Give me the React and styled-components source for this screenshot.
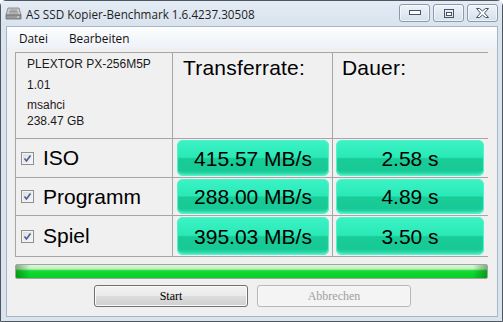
import React from 'react'
import styled, { createGlobalStyle } from 'styled-components'

const Global = createGlobalStyle`
  html, body { margin: 0; padding: 0; background: #fff; }
  body { width: 503px; height: 322px; overflow: hidden; }
`

const Window = styled.div`
  box-sizing: border-box;
  width: 503px;
  height: 322px;
  border: 1px solid #4f5660;
  border-radius: 6px 6px 0 0;
  background: #dae4ef;
  display: flex;
  flex-direction: column;
  font-family: 'Liberation Sans', Arial, sans-serif;
`

const TitleBar = styled.div`
  height: 24px;
  display: flex;
  align-items: center;
  padding: 0 4px 0 4px;
  background: linear-gradient(to bottom, #e4ecf5, #d9e3ee);
`

const Title = styled.span`
  margin-left: 4px;
  font-family: 'Open Sans', 'Noto Sans', sans-serif;
  font-size: 11.7px;
  color: #1e1e1e;
  flex: 1;
  padding-top: 1px;
`

const CaptionGroup = styled.div`
  display: flex;
  gap: 3px;
  align-self: flex-start;
  margin-top: 3px;
`

const CaptionButton = styled.div`
  box-sizing: border-box;
  width: 31px;
  height: 18px;
  border: 1px solid #8d9aaa;
  border-radius: 3px;
  background: linear-gradient(to bottom, #eef3f8, #d6e0ec);
  display: flex;
  align-items: center;
  justify-content: center;
  box-shadow: inset 0 0 0 1px rgba(255, 255, 255, 0.6);
`

const Client = styled.div`
  flex: 1;
  margin: 1px 4px 4px 5px;
  border: 1px solid #a9b5c3;
  background: #f0f0f0;
  display: flex;
  flex-direction: column;
`

const MenuBar = styled.div`
  height: 21px;
  display: flex;
  align-items: center;
  padding-left: 12px;
  gap: 21px;
  background: linear-gradient(to bottom, #fcfdfe, #eef2f7);
  font-family: 'Open Sans', 'Noto Sans', sans-serif;
  font-size: 11.8px;
  color: #111;
`

const Content = styled.div`
  flex: 1;
  display: flex;
  flex-direction: column;
  padding: 4px 9px 0 8px;
`

const Grid = styled.div`
  display: grid;
  grid-template-columns: 156px 159px 155px;
  grid-template-rows: 85px 38px 37px 40px;
  gap: 1px;
  padding: 1px;
  background: #a6a6a6;
`

const Cell = styled.div`
  background: #f0f0f0;
  display: flex;
  align-items: ${p => (p.$top ? 'flex-start' : 'center')};
  padding: ${p => p.$pad || '0'};
  box-sizing: border-box;
`

const InfoList = styled.div`
  display: flex;
  flex-direction: column;
  padding: 4px 0 0 11px;
  font-size: 12px;
  color: #1a1a1a;
  line-height: 14px;
  div { margin-bottom: 2.5px; }
  div:nth-child(1) { margin-bottom: 7px; }
  div:nth-child(2) { margin-bottom: 6px; }
  div:nth-child(3) { color: #2a1a1a; margin-bottom: 2px; }
`

const HeadLabel = styled.div`
  font-size: 21px;
  color: #000;
  padding: 3px 0 0 ${p => p.$left}px;
  letter-spacing: 0.2px;
`

const RowLabel = styled.label`
  display: flex;
  align-items: center;
  gap: 9px;
  padding-left: 5px;
  font-size: 21px;
  color: #000;
`

const Check = styled.span`
  box-sizing: border-box;
  width: 13px;
  height: 13px;
  border: 1px solid #8e8f8f;
  background: linear-gradient(135deg, #dcdcdc, #f8f8f8);
  display: flex;
  align-items: center;
  justify-content: center;
  box-shadow: inset 0 0 0 1px #f4f4f4;
`

const ValueBox = styled.div`
  flex: 1;
  align-self: stretch;
  border-radius: 6px;
  display: flex;
  align-items: center;
  justify-content: center;
  font-size: 21px;
  color: #000;
  padding-top: 1px;
  background: linear-gradient(to bottom, #3cf3c6 0%, #2ae9b6 48%, #18cc98 52%, #17c995 85%, #40e6bb 100%);
  box-shadow: inset 0 0 0 1px #52f1c9, inset 0 -1px 2px #7ff5d7;
`

const Progress = styled.div`
  margin-top: 7px;
  height: 15px;
  box-sizing: border-box;
  border: 1px solid #a4a4a4;
  border-radius: 2px;
  background:
    linear-gradient(to right, rgba(0, 70, 0, 0.4), rgba(0, 70, 0, 0) 3%, rgba(0, 70, 0, 0) 97%, rgba(0, 70, 0, 0.4)),
    linear-gradient(to bottom, #d6f8d6 0%, #bff3c0 30%, #15d833 45%, #04d025 100%);
`

const ButtonRow = styled.div`
  display: flex;
  justify-content: center;
  gap: 9px;
  margin-top: 6px;
  padding-left: 2px;
`

const Button = styled.button`
  width: 154px;
  height: 22px;
  border-radius: 3px;
  font-family: 'Liberation Serif', 'Times New Roman', serif;
  font-size: 12px;
  padding: 0;
  border: 1px solid ${p => (p.disabled ? '#b5b8bb' : '#707070')};
  color: ${p => (p.disabled ? '#a0a0a0' : '#000')};
  background: ${p =>
    p.disabled
      ? '#f4f4f4'
      : 'linear-gradient(to bottom, #f2f2f2 0%, #ebebeb 48%, #dddddd 52%, #cfcfcf 100%)'};
  box-shadow: inset 0 0 0 1px ${p => (p.disabled ? '#f7f7f7' : '#fbfbfb')};
`

const DriveIcon = () => (
  <svg width="17" height="15" viewBox="0 0 17 15">
    <path d="M3 2 L14 2 L16 9 L1 9 Z" fill="#c9c9c9" stroke="#7d7d7d" strokeWidth="0.8" />
    <path d="M1 9 L16 9 L16 13 L1 13 Z" fill="#9a9a9a" stroke="#6a6a6a" strokeWidth="0.8" />
    <path d="M5 4 L12 4 M4.5 5.5 L12.5 5.5 M4 7 L13 7" stroke="#8a8a8a" strokeWidth="0.8" />
    <rect x="12" y="10.5" width="2" height="1" fill="#e8e8e8" />
  </svg>
)

const CheckMark = () => (
  <svg width="9" height="9" viewBox="0 0 9 9">
    <path d="M1.5 4.5 L3.5 7 L7.5 1.5" fill="none" stroke="#4a5e9a" strokeWidth="1.6" />
  </svg>
)

const rows = [
  { name: 'ISO', rate: '415.57 MB/s', time: '2.58 s' },
  { name: 'Programm', rate: '288.00 MB/s', time: '4.89 s' },
  { name: 'Spiel', rate: '395.03 MB/s', time: '3.50 s' },
]

const App = () => {
  return (
    <>
      <Global />
      <Window>
        <TitleBar>
          <DriveIcon />
          <Title>AS SSD Kopier-Benchmark 1.6.4237.30508</Title>
          <CaptionGroup>
            <CaptionButton>
              <svg width="12" height="6" viewBox="0 0 12 6">
                <rect x="0.5" y="0.5" width="11" height="4" fill="#fff" stroke="#46546a" />
              </svg>
            </CaptionButton>
            <CaptionButton>
              <svg width="10" height="9" viewBox="0 0 10 9">
                <rect x="0.5" y="0.5" width="9" height="8" fill="none" stroke="#46546a" />
                <rect x="2.5" y="3.5" width="5" height="3" fill="#fff" stroke="#46546a" />
              </svg>
            </CaptionButton>
            <CaptionButton>
              <svg width="13" height="10" viewBox="0 0 13 10">
                <path
                  d="M0.5 0.5 H3.5 L6.5 3 L9.5 0.5 H12.5 L8.5 5 L12.5 9.5 H9.5 L6.5 7 L3.5 9.5 H0.5 L4.5 5 Z"
                  fill="#fff"
                  stroke="#46546a"
                  strokeWidth="1"
                />
              </svg>
            </CaptionButton>
          </CaptionGroup>
        </TitleBar>
        <Client>
          <MenuBar>
            <span>Datei</span>
            <span>Bearbeiten</span>
          </MenuBar>
          <Content>
            <Grid>
              <Cell $top>
                <InfoList>
                  <div>PLEXTOR PX-256M5P</div>
                  <div>1.01</div>
                  <div>msahci</div>
                  <div>238.47 GB</div>
                </InfoList>
              </Cell>
              <Cell $top>
                <HeadLabel $left={10}>Transferrate:</HeadLabel>
              </Cell>
              <Cell $top>
                <HeadLabel $left={9}>Dauer:</HeadLabel>
              </Cell>
              {rows.map(r => (
                <React.Fragment key={r.name}>
                  <Cell>
                    <RowLabel>
                      <Check>
                        <CheckMark />
                      </Check>
                      {r.name}
                    </RowLabel>
                  </Cell>
                  <Cell $pad="1px 3px 1px 4px">
                    <ValueBox>{r.rate}</ValueBox>
                  </Cell>
                  <Cell $pad="1px 4px 1px 3px">
                    <ValueBox>{r.time}</ValueBox>
                  </Cell>
                </React.Fragment>
              ))}
            </Grid>
            <Progress />
            <ButtonRow>
              <Button>Start</Button>
              <Button disabled>Abbrechen</Button>
            </ButtonRow>
          </Content>
        </Client>
      </Window>
    </>
  )
}

export default App
